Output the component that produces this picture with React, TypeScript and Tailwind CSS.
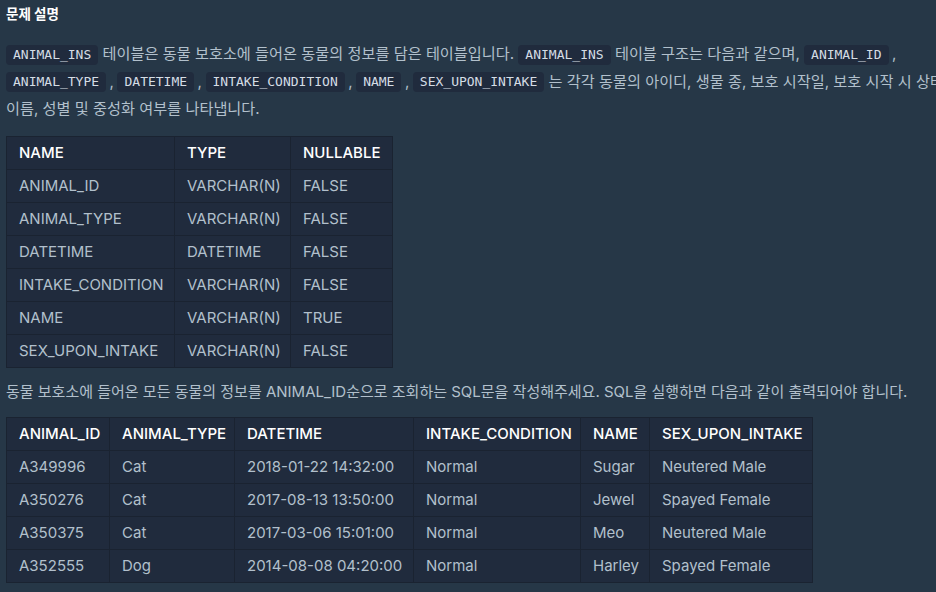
const code = (t: string) => (
  <code className="inline-block rounded-[4px] bg-[#202b3d] px-[7px] py-0 font-['DejaVu_Sans_Mono',monospace] text-[13px] leading-[20px] text-[#d5dde5] align-middle">
    {t}
  </code>
);

const comma = <span className="mx-[3.5px]">,</span>;

const schema = [
  ['ANIMAL_ID', 'VARCHAR(N)', 'FALSE'],
  ['ANIMAL_TYPE', 'VARCHAR(N)', 'FALSE'],
  ['DATETIME', 'DATETIME', 'FALSE'],
  ['INTAKE_CONDITION', 'VARCHAR(N)', 'FALSE'],
  ['NAME', 'VARCHAR(N)', 'TRUE'],
  ['SEX_UPON_INTAKE', 'VARCHAR(N)', 'FALSE'],
];

const result = [
  ['A349996', 'Cat', '2018-01-22 14:32:00', 'Normal', 'Sugar', 'Neutered Male'],
  ['A350276', 'Cat', '2017-08-13 13:50:00', 'Normal', 'Jewel', 'Spayed Female'],
  ['A350375', 'Cat', '2017-03-06 15:01:00', 'Normal', 'Meo', 'Neutered Male'],
  ['A352555', 'Dog', '2014-08-08 04:20:00', 'Normal', 'Harley', 'Spayed Female'],
];

function Table({ head, rows, widths }: { head: string[]; rows: string[][]; widths: number[] }) {
  const total = widths.reduce((a, b) => a + b, 0);
  return (
    <table className="table-fixed border-collapse bg-[#202b3d] text-[15px] leading-[32px]" style={{ width: total }}>
      <colgroup>
        {widths.map((w, i) => (
          <col key={i} style={{ width: w }} />
        ))}
      </colgroup>
      <thead>
        <tr>
          {head.map(h => (
            <th key={h} className="border border-[#1a2331] px-3 text-left font-medium text-white whitespace-nowrap">
              {h}
            </th>
          ))}
        </tr>
      </thead>
      <tbody>
        {rows.map((r, i) => (
          <tr key={i}>
            {r.map((c, j) => (
              <td key={j} className="border border-[#1a2331] px-3 text-[#b2c0cc] whitespace-nowrap">
                {c}
              </td>
            ))}
          </tr>
        ))}
      </tbody>
    </table>
  );
}

export default function App() {
  return (
    <div className="w-[936px] h-[592px] overflow-hidden bg-[#263747] font-['Inter','Noto_Sans_CJK_KR',sans-serif]">
      <div className="w-[975px] px-[6px] pt-[4px]">
        <h4 className="text-[13.5px] font-bold leading-[20px] text-white">문제 설명</h4>
        <p className="mt-[16px] break-keep text-[15.2px] leading-[27.5px] text-[#b2c0cc]">
          {code('ANIMAL_INS')} 테이블은 동물 보호소에 들어온 동물의 정보를 담은 테이블입니다. {code('ANIMAL_INS')} 테이블 구조는 다음과 같으며,{' '}
          {code('ANIMAL_ID')}
          {comma} {code('ANIMAL_TYPE')}
          {comma}
          {code('DATETIME')}
          {comma}
          {code('INTAKE_CONDITION')}
          {comma}
          {code('NAME')}
          {comma}
          {code('SEX_UPON_INTAKE')} 는 각각 동물의 아이디, 생물 종, 보호 시작일, 보호 시작 시 상태, 이름, 성별 및 중성화 여부를 나타냅니다.
        </p>
        <div className="mt-[13px]">
          <Table head={['NAME', 'TYPE', 'NULLABLE']} rows={schema} widths={[168, 116, 102]} />
        </div>
        <p className="mt-[10px] text-[15px] leading-[27.5px] text-[#b2c0cc]">
          동물 보호소에 들어온 모든 동물의 정보를 ANIMAL_ID순으로 조회하는 SQL문을 작성해주세요. SQL을 실행하면 다음과 같이 출력되어야 합니다.
        </p>
        <div className="mt-[12px]">
          <Table
            head={['ANIMAL_ID', 'ANIMAL_TYPE', 'DATETIME', 'INTAKE_CONDITION', 'NAME', 'SEX_UPON_INTAKE']}
            rows={result}
            widths={[103, 125, 179, 167, 69, 163]}
          />
        </div>
      </div>
    </div>
  );
}
